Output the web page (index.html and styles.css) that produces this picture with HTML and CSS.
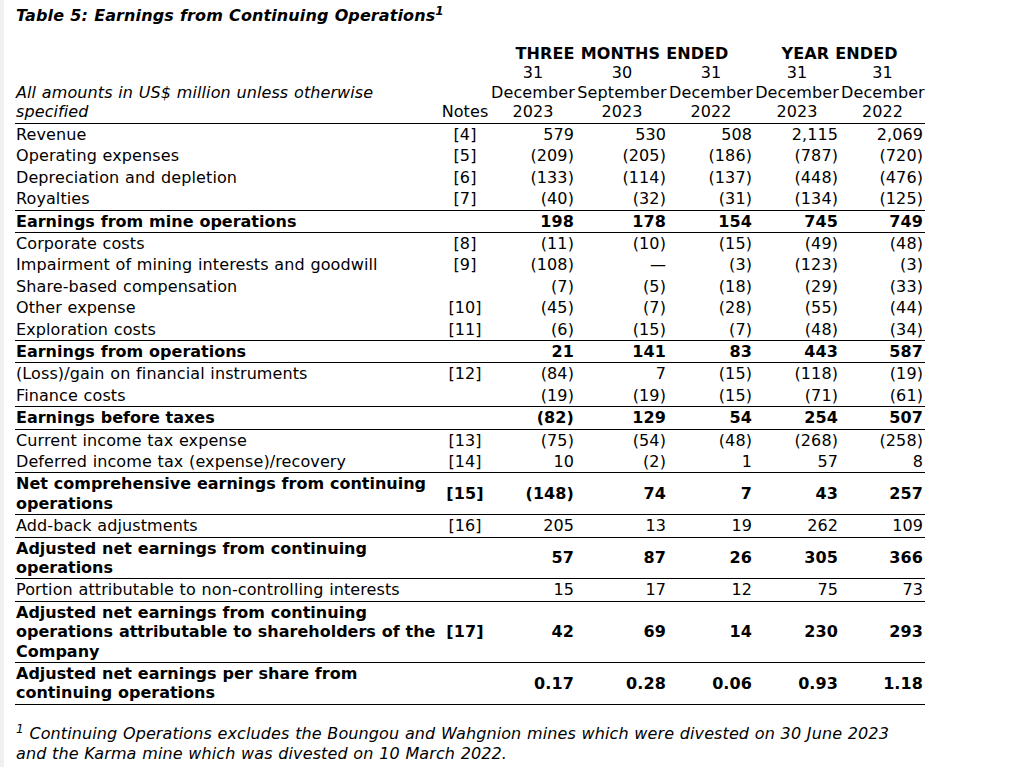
FILE: index.html
```html
<!DOCTYPE html>
<html lang="en">
<head>
<meta charset="utf-8">
<title>Table 5: Earnings from Continuing Operations</title>
<link rel="stylesheet" href="styles.css">
</head>
<body>
<div class="page">
  <p class="title">Table 5: Earnings from Continuing Operations<sup class="title-sup">1</sup></p>
  <table class="fin">
    <colgroup>
      <col class="c-label"><col class="c-notes"><col class="c-d1"><col class="c-d2"><col class="c-d3"><col class="c-d4"><col class="c-d5">
    </colgroup>
    <thead>
      <tr class="group">
        <th colspan="2"></th>
        <th colspan="3">THREE MONTHS ENDED</th>
        <th colspan="2">YEAR ENDED</th>
      </tr>
      <tr class="dates">
        <th class="lbl">All amounts in US$ million unless otherwise<br>specified</th>
        <th>Notes</th>
        <th>31<br>December<br>2023</th>
        <th>30<br>September<br>2023</th>
        <th>31<br>December<br>2022</th>
        <th>31<br>December<br>2023</th>
        <th>31<br>December<br>2022</th>
      </tr>
    </thead>
    <tbody>
      <tr><td class="lbl">Revenue</td><td class="nt">[4]</td><td>579</td><td>530</td><td>508</td><td>2,115</td><td>2,069</td></tr>
      <tr><td class="lbl">Operating expenses</td><td class="nt">[5]</td><td>(209)</td><td>(205)</td><td>(186)</td><td>(787)</td><td>(720)</td></tr>
      <tr><td class="lbl">Depreciation and depletion</td><td class="nt">[6]</td><td>(133)</td><td>(114)</td><td>(137)</td><td>(448)</td><td>(476)</td></tr>
      <tr><td class="lbl">Royalties</td><td class="nt">[7]</td><td>(40)</td><td>(32)</td><td>(31)</td><td>(134)</td><td>(125)</td></tr>
      <tr class="total"><td class="lbl">Earnings from mine operations</td><td class="nt"></td><td>198</td><td>178</td><td>154</td><td>745</td><td>749</td></tr>
      <tr><td class="lbl">Corporate costs</td><td class="nt">[8]</td><td>(11)</td><td>(10)</td><td>(15)</td><td>(49)</td><td>(48)</td></tr>
      <tr><td class="lbl">Impairment of mining interests and goodwill</td><td class="nt">[9]</td><td>(108)</td><td>—</td><td>(3)</td><td>(123)</td><td>(3)</td></tr>
      <tr><td class="lbl">Share-based compensation</td><td class="nt"></td><td>(7)</td><td>(5)</td><td>(18)</td><td>(29)</td><td>(33)</td></tr>
      <tr><td class="lbl">Other expense</td><td class="nt">[10]</td><td>(45)</td><td>(7)</td><td>(28)</td><td>(55)</td><td>(44)</td></tr>
      <tr><td class="lbl">Exploration costs</td><td class="nt">[11]</td><td>(6)</td><td>(15)</td><td>(7)</td><td>(48)</td><td>(34)</td></tr>
      <tr class="total"><td class="lbl">Earnings from operations</td><td class="nt"></td><td>21</td><td>141</td><td>83</td><td>443</td><td>587</td></tr>
      <tr><td class="lbl">(Loss)/gain on financial instruments</td><td class="nt">[12]</td><td>(84)</td><td>7</td><td>(15)</td><td>(118)</td><td>(19)</td></tr>
      <tr><td class="lbl">Finance costs</td><td class="nt"></td><td>(19)</td><td>(19)</td><td>(15)</td><td>(71)</td><td>(61)</td></tr>
      <tr class="total"><td class="lbl">Earnings before taxes</td><td class="nt"></td><td>(82)</td><td>129</td><td>54</td><td>254</td><td>507</td></tr>
      <tr><td class="lbl">Current income tax expense</td><td class="nt">[13]</td><td>(75)</td><td>(54)</td><td>(48)</td><td>(268)</td><td>(258)</td></tr>
      <tr><td class="lbl">Deferred income tax (expense)/recovery</td><td class="nt">[14]</td><td>10</td><td>(2)</td><td>1</td><td>57</td><td>8</td></tr>
      <tr class="total"><td class="lbl">Net comprehensive earnings from continuing<br>operations</td><td class="nt">[15]</td><td>(148)</td><td>74</td><td>7</td><td>43</td><td>257</td></tr>
      <tr><td class="lbl">Add-back adjustments</td><td class="nt">[16]</td><td>205</td><td>13</td><td>19</td><td>262</td><td>109</td></tr>
      <tr class="total"><td class="lbl">Adjusted net earnings from continuing<br>operations</td><td class="nt"></td><td>57</td><td>87</td><td>26</td><td>305</td><td>366</td></tr>
      <tr><td class="lbl">Portion attributable to non-controlling interests</td><td class="nt"></td><td>15</td><td>17</td><td>12</td><td>75</td><td>73</td></tr>
      <tr class="total"><td class="lbl">Adjusted net earnings from continuing<br>operations attributable to shareholders of the<br>Company</td><td class="nt">[17]</td><td>42</td><td>69</td><td>14</td><td>230</td><td>293</td></tr>
      <tr class="total"><td class="lbl">Adjusted net earnings per share from<br>continuing operations</td><td class="nt"></td><td>0.17</td><td>0.28</td><td>0.06</td><td>0.93</td><td>1.18</td></tr>
    </tbody>
  </table>
  <p class="footnote"><sup class="fn-sup">1</sup> Continuing Operations excludes the Boungou and Wahgnion mines which were divested on 30 June 2023<br>and the Karma mine which was divested on 10 March 2022.</p>
</div>
</body>
</html>
```

FILE: styles.css
```css
html, body {
  margin: 0;
  padding: 0;
  background: #ffffff;
}

body {
  border-left: 4px solid #f0f0f0;
  min-height: 767px;
  box-sizing: border-box;
  font-family: "DejaVu Sans", Verdana, sans-serif;
  font-size: 16px;
  line-height: 19.4px;
  letter-spacing: 0.1px;
  word-spacing: 0.5px;
  color: #000000;
}

.page {
  padding: 6px 0 0 11px;
}

.title {
  margin: 0 0 18.5px 1px;
  font-weight: bold;
  font-style: italic;
  white-space: nowrap;
}

.title-sup {
  font-size: 12px;
  line-height: 0;
  vertical-align: 6px;
}

.fin {
  border-collapse: collapse;
  table-layout: fixed;
  width: 910px;
}

.c-label { width: 425px; }
.c-notes { width: 50px; }
.c-d1 { width: 86px; }
.c-d2 { width: 92px; }
.c-d3 { width: 86px; }
.c-d4 { width: 86px; }
.c-d5 { width: 85px; }

.fin th {
  padding: 0 1px;
  font-weight: normal;
  text-align: center;
  vertical-align: bottom;
  white-space: nowrap;
  line-height: 19.5px;
}

.fin .group th {
  font-weight: bold;
}

.fin .dates th {
  border-bottom: 1px solid #000000;
  padding-bottom: 1px;
}

.fin .dates th.lbl {
  text-align: left;
  font-style: italic;
  padding-left: 1px;
}

.fin td {
  padding: 1px 2px 1px 1px;
  text-align: right;
  vertical-align: middle;
  white-space: nowrap;
}

.fin td.lbl {
  text-align: left;
}

.fin td.nt {
  text-align: center;
  padding: 1px 0;
}

.fin tr.total td {
  font-weight: bold;
  border-top: 1px solid #000000;
  border-bottom: 1px solid #000000;
}

.fin tr.total td.lbl {
  letter-spacing: 0;
  word-spacing: 0.3px;
}

.footnote {
  margin: 19px 0 0 1px;
  font-style: italic;
  line-height: 20px;
  white-space: nowrap;
}

.fn-sup {
  font-size: 12px;
  line-height: 0;
  vertical-align: 6px;
}
```
